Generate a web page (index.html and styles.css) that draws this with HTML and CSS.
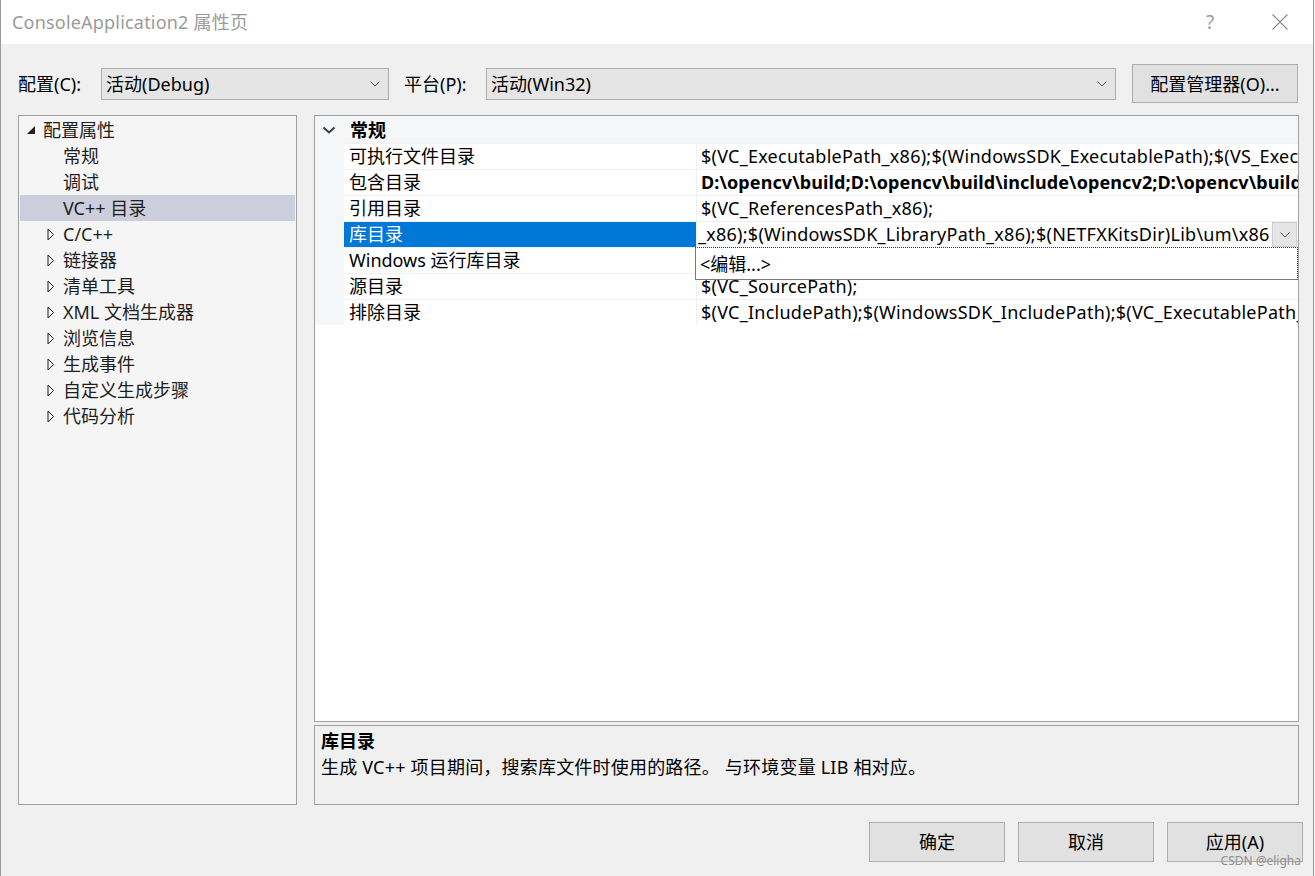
FILE: index.html
```html
<!DOCTYPE html>
<html lang="zh-CN">
<head>
<meta charset="utf-8">
<title>ConsoleApplication2 属性页</title>
<link rel="stylesheet" href="styles.css">
</head>
<body>
<div class="window">
  <div class="titlebar">
    <span class="title">ConsoleApplication2 属性页</span>
    <span class="tb-btn help">?</span>
    <span class="tb-btn close"><svg width="16" height="16" viewBox="0 0 16 16"><path d="M0.5 0.5 L15.5 15.5 M15.5 0.5 L0.5 15.5" stroke="#8a8a8a" stroke-width="1.1" fill="none"/></svg></span>
  </div>
  <div class="content">
    <div class="toolbar">
      <span class="lbl lbl-config">配置(C):</span>
      <div class="combo combo-config"><span class="combo-text">活动(Debug)</span><svg class="chev" width="10" height="6" viewBox="0 0 10 6"><path d="M0.5 0.5 L5 5 L9.5 0.5" stroke="#555" stroke-width="1" fill="none"/></svg></div>
      <span class="lbl lbl-platform">平台(P):</span>
      <div class="combo combo-platform"><span class="combo-text">活动(Win32)</span><svg class="chev" width="10" height="6" viewBox="0 0 10 6"><path d="M0.5 0.5 L5 5 L9.5 0.5" stroke="#555" stroke-width="1" fill="none"/></svg></div>
      <button class="btn btn-mgr">配置管理器(O)...</button>
    </div>
    <div class="main">
      <div class="tree">
        <div class="tree-item lvl0"><span class="arrow"><svg width="10" height="10" viewBox="0 0 10 10"><path d="M9 1 L9 9 L1 9 Z" fill="#1e1e1e"/></svg></span><span>配置属性</span></div>
        <div class="tree-item lvl1"><span class="arrow"></span><span>常规</span></div>
        <div class="tree-item lvl1"><span class="arrow"></span><span>调试</span></div>
        <div class="tree-item lvl1 selected"><span class="arrow"></span><span>VC++ 目录</span></div>
        <div class="tree-item lvl1"><span class="arrow"><svg width="8" height="13" viewBox="0 0 8 13"><path d="M1 1 L6.5 6.5 L1 12 Z" fill="none" stroke="#1e1e1e" stroke-width="1"/></svg></span><span>C/C++</span></div>
        <div class="tree-item lvl1"><span class="arrow"><svg width="8" height="13" viewBox="0 0 8 13"><path d="M1 1 L6.5 6.5 L1 12 Z" fill="none" stroke="#1e1e1e" stroke-width="1"/></svg></span><span>链接器</span></div>
        <div class="tree-item lvl1"><span class="arrow"><svg width="8" height="13" viewBox="0 0 8 13"><path d="M1 1 L6.5 6.5 L1 12 Z" fill="none" stroke="#1e1e1e" stroke-width="1"/></svg></span><span>清单工具</span></div>
        <div class="tree-item lvl1"><span class="arrow"><svg width="8" height="13" viewBox="0 0 8 13"><path d="M1 1 L6.5 6.5 L1 12 Z" fill="none" stroke="#1e1e1e" stroke-width="1"/></svg></span><span>XML 文档生成器</span></div>
        <div class="tree-item lvl1"><span class="arrow"><svg width="8" height="13" viewBox="0 0 8 13"><path d="M1 1 L6.5 6.5 L1 12 Z" fill="none" stroke="#1e1e1e" stroke-width="1"/></svg></span><span>浏览信息</span></div>
        <div class="tree-item lvl1"><span class="arrow"><svg width="8" height="13" viewBox="0 0 8 13"><path d="M1 1 L6.5 6.5 L1 12 Z" fill="none" stroke="#1e1e1e" stroke-width="1"/></svg></span><span>生成事件</span></div>
        <div class="tree-item lvl1"><span class="arrow"><svg width="8" height="13" viewBox="0 0 8 13"><path d="M1 1 L6.5 6.5 L1 12 Z" fill="none" stroke="#1e1e1e" stroke-width="1"/></svg></span><span>自定义生成步骤</span></div>
        <div class="tree-item lvl1"><span class="arrow"><svg width="8" height="13" viewBox="0 0 8 13"><path d="M1 1 L6.5 6.5 L1 12 Z" fill="none" stroke="#1e1e1e" stroke-width="1"/></svg></span><span>代码分析</span></div>
      </div>
      <div class="right">
        <div class="grid">
          <div class="cat-row">
            <span class="gutter"><svg width="14" height="8" viewBox="0 0 14 8"><path d="M1.5 1.5 L7 6.5 L12.5 1.5" stroke="#3c3c3c" stroke-width="2" fill="none"/></svg></span>
            <span class="cat-name">常规</span>
          </div>
          <div class="prop-row">
            <span class="gutter"></span><span class="pname">可执行文件目录</span><span class="pval">$(VC_ExecutablePath_x86);$(WindowsSDK_ExecutablePath);$(VS_ExecutablePath);$(MSBuild_ExecutablePath);$(FxCopDir);$(PATH);</span>
          </div>
          <div class="prop-row">
            <span class="gutter"></span><span class="pname">包含目录</span><span class="pval bold">D:\opencv\build;D:\opencv\build\include\opencv2;D:\opencv\build\include;$(IncludePath)</span>
          </div>
          <div class="prop-row">
            <span class="gutter"></span><span class="pname">引用目录</span><span class="pval">$(VC_ReferencesPath_x86);</span>
          </div>
          <div class="prop-row active">
            <span class="gutter"></span><span class="pname">库目录</span>
            <span class="pedit"><span class="edit-text">_x86);$(WindowsSDK_LibraryPath_x86);$(NETFXKitsDir)Lib\um\x86</span><span class="drop-btn"><svg width="10" height="6" viewBox="0 0 10 6"><path d="M0.5 0.5 L5 5 L9.5 0.5" stroke="#555" stroke-width="1" fill="none"/></svg></span></span>
          </div>
          <div class="prop-row">
            <span class="gutter"></span><span class="pname">Windows 运行库目录</span><span class="pval"></span>
          </div>
          <div class="prop-row">
            <span class="gutter"></span><span class="pname">源目录</span><span class="pval">$(VC_SourcePath);</span>
          </div>
          <div class="prop-row">
            <span class="gutter"></span><span class="pname">排除目录</span><span class="pval">$(VC_IncludePath);$(WindowsSDK_IncludePath);$(VC_ExecutablePath_x86);$(VC_LibraryPath_x86)</span>
          </div>
          <div class="popup"><span class="popup-item">&lt;编辑...&gt;</span></div>
        </div>
        <div class="desc">
          <div class="desc-title">库目录</div>
          <div class="desc-text">生成 VC++ 项目期间，搜索库文件时使用的路径。 与环境变量 LIB 相对应。</div>
        </div>
      </div>
    </div>
    <div class="footer">
      <button class="btn btn-foot">确定</button>
      <button class="btn btn-foot">取消</button>
      <button class="btn btn-foot">应用(A)</button>
      <span class="watermark">CSDN @eligha</span>
    </div>
  </div>
</div>
</body>
</html>
```

FILE: styles.css
```css
* { box-sizing: border-box; }

html, body {
  margin: 0;
  padding: 0;
}

body {
  background: #f0f0f0;
  font-family: "Noto Sans", "Noto Sans CJK SC", sans-serif;
  font-size: 18px;
  color: #000;
  overflow: hidden;
}

.window {
  width: 1314px;
  height: 876px;
  border-left: 1px solid #9a9a9a;
  border-right: 1px solid #9a9a9a;
  background: #f0f0f0;
  display: flex;
  flex-direction: column;
}

/* Title bar */
.titlebar {
  height: 44px;
  background: #fff;
  display: flex;
  align-items: center;
  padding-left: 11px;
  padding-right: 10px;
  flex: none;
}

.title {
  flex: 1;
  color: #9a9a9a;
  font-size: 18px;
  line-height: 24px;
  letter-spacing: 0.2px;
}

.tb-btn {
  width: 46px;
  height: 44px;
  display: flex;
  align-items: center;
  justify-content: center;
}

.help {
  color: #9a9a9a;
  font-size: 19px;
  margin-right: 24px;
}

/* Content */
.content {
  flex: 1;
  min-width: 0;
  display: flex;
  flex-direction: column;
  padding: 20px 14px 0 17px;
}

.toolbar {
  height: 39px;
  display: flex;
  align-items: center;
  flex: none;
}

.lbl {
  line-height: 24px;
  white-space: nowrap;
  flex: none;
}

.lbl-config { width: 83px; }
.lbl-platform { width: 82px; margin-left: 15px; }

.combo {
  height: 32px;
  background: #e5e5e5;
  border: 1px solid #adadad;
  display: flex;
  align-items: center;
  padding-left: 4px;
  padding-right: 8px;
  flex: none;
}

.combo-text {
  flex: 1;
  line-height: 24px;
  white-space: nowrap;
}

.combo-config { width: 288px; }
.combo-platform { width: 630px; }

.btn {
  font-family: inherit;
  font-size: 18px;
  color: #000;
  background: #e1e1e1;
  border: 1px solid #adadad;
  padding: 0;
  line-height: 24px;
  flex: none;
}

.btn-mgr {
  width: 166px;
  height: 39px;
  margin-left: 16px;
}

/* Main area */
.main {
  margin-top: 12px;
  height: 690px;
  display: flex;
  gap: 17px;
  flex: none;
  min-width: 0;
}

.tree {
  width: 279px;
  flex: none;
  border: 1px solid #a0a0a0;
  background: #f5f5f5;
  padding: 1px;
}

.tree-item {
  height: 26px;
  display: flex;
  align-items: center;
  line-height: 24px;
  white-space: nowrap;
  color: #1e1e1e;
}

.tree-item.lvl0 { padding-left: 6px; }
.tree-item.lvl1 { padding-left: 27px; }

.tree-item .arrow {
  display: flex;
  align-items: center;
  flex: none;
}

.tree-item.lvl0 .arrow { width: 17px; }
.tree-item.lvl1 .arrow { width: 16px; }

.tree-item.selected {
  background: #cccedb;
}

.right {
  flex: 1;
  min-width: 0;
  display: flex;
  flex-direction: column;
  gap: 3px;
}

.grid {
  position: relative;
  height: 607px;
  border: 1px solid #a0a0a0;
  background: #fff;
  overflow: hidden;
}

.cat-row {
  height: 27px;
  display: flex;
  align-items: center;
  background: #f5f6f8;
}

.gutter {
  width: 29px;
  flex: none;
  align-self: stretch;
  display: flex;
  align-items: center;
  justify-content: center;
  padding-right: 2px;
  background: #f5f6f8;
}

.cat-name {
  font-weight: bold;
  padding-left: 6px;
  line-height: 24px;
}

.prop-row {
  height: 26px;
  display: flex;
  border-top: 1px solid #f0f0f0;
}

.prop-row .gutter {
  margin-top: -1px;
  border-top: 1px solid #f5f6f8;
}

.pname {
  width: 353px;
  flex: none;
  padding-left: 5px;
  line-height: 25px;
  white-space: nowrap;
  border-right: 1px solid #f0f0f0;
}

.pval {
  flex: 1;
  min-width: 0;
  padding-left: 4px;
  line-height: 25px;
  white-space: nowrap;
  overflow: hidden;
  letter-spacing: 0.25px;
}

.pval.bold { font-weight: bold; letter-spacing: 0.1px; }

.prop-row.active .pname {
  background: #0078d7;
  color: #fff;
}

.pedit {
  flex: 1;
  min-width: 0;
  display: flex;
  align-items: stretch;
  padding-left: 1px;
  padding-right: 1px;
}

.edit-text {
  flex: 1;
  min-width: 0;
  overflow: hidden;
  white-space: nowrap;
  line-height: 25px;
  letter-spacing: 0.25px;
}

.drop-btn {
  width: 25px;
  height: 25px;
  flex: none;
  background: #e5e5e5;
  border: 1px solid #cccccc;
  display: flex;
  align-items: center;
  justify-content: center;
}

.popup {
  position: absolute;
  left: 380px;
  top: 131px;
  width: 603px;
  height: 33px;
  background: #fff;
  border-left: 1px solid #7a7a7a;
  border-bottom: 1px solid #7a7a7a;
  border-top: 1px dotted #333;
  border-right: 1px dotted #333;
  padding-left: 4px;
  display: flex;
  align-items: center;
}

.popup-item {
  line-height: 24px;
  white-space: nowrap;
}

.desc {
  height: 80px;
  border: 1px solid #a0a0a0;
  background: #f0f0f0;
  padding: 2px 6px;
}

.desc-title {
  font-weight: bold;
  line-height: 26px;
}

.desc-text {
  line-height: 26px;
  white-space: nowrap;
  letter-spacing: 0.2px;
}

/* Footer */
.footer {
  position: relative;
  margin-top: 17px;
  margin-right: -4px;
  display: flex;
  justify-content: flex-end;
  gap: 13px;
}

.btn-foot {
  width: 136px;
  height: 40px;
}

.watermark {
  position: absolute;
  right: 2px;
  top: 32px;
  font-size: 12px;
  line-height: 14px;
  color: #8f8f8f;
}
```
